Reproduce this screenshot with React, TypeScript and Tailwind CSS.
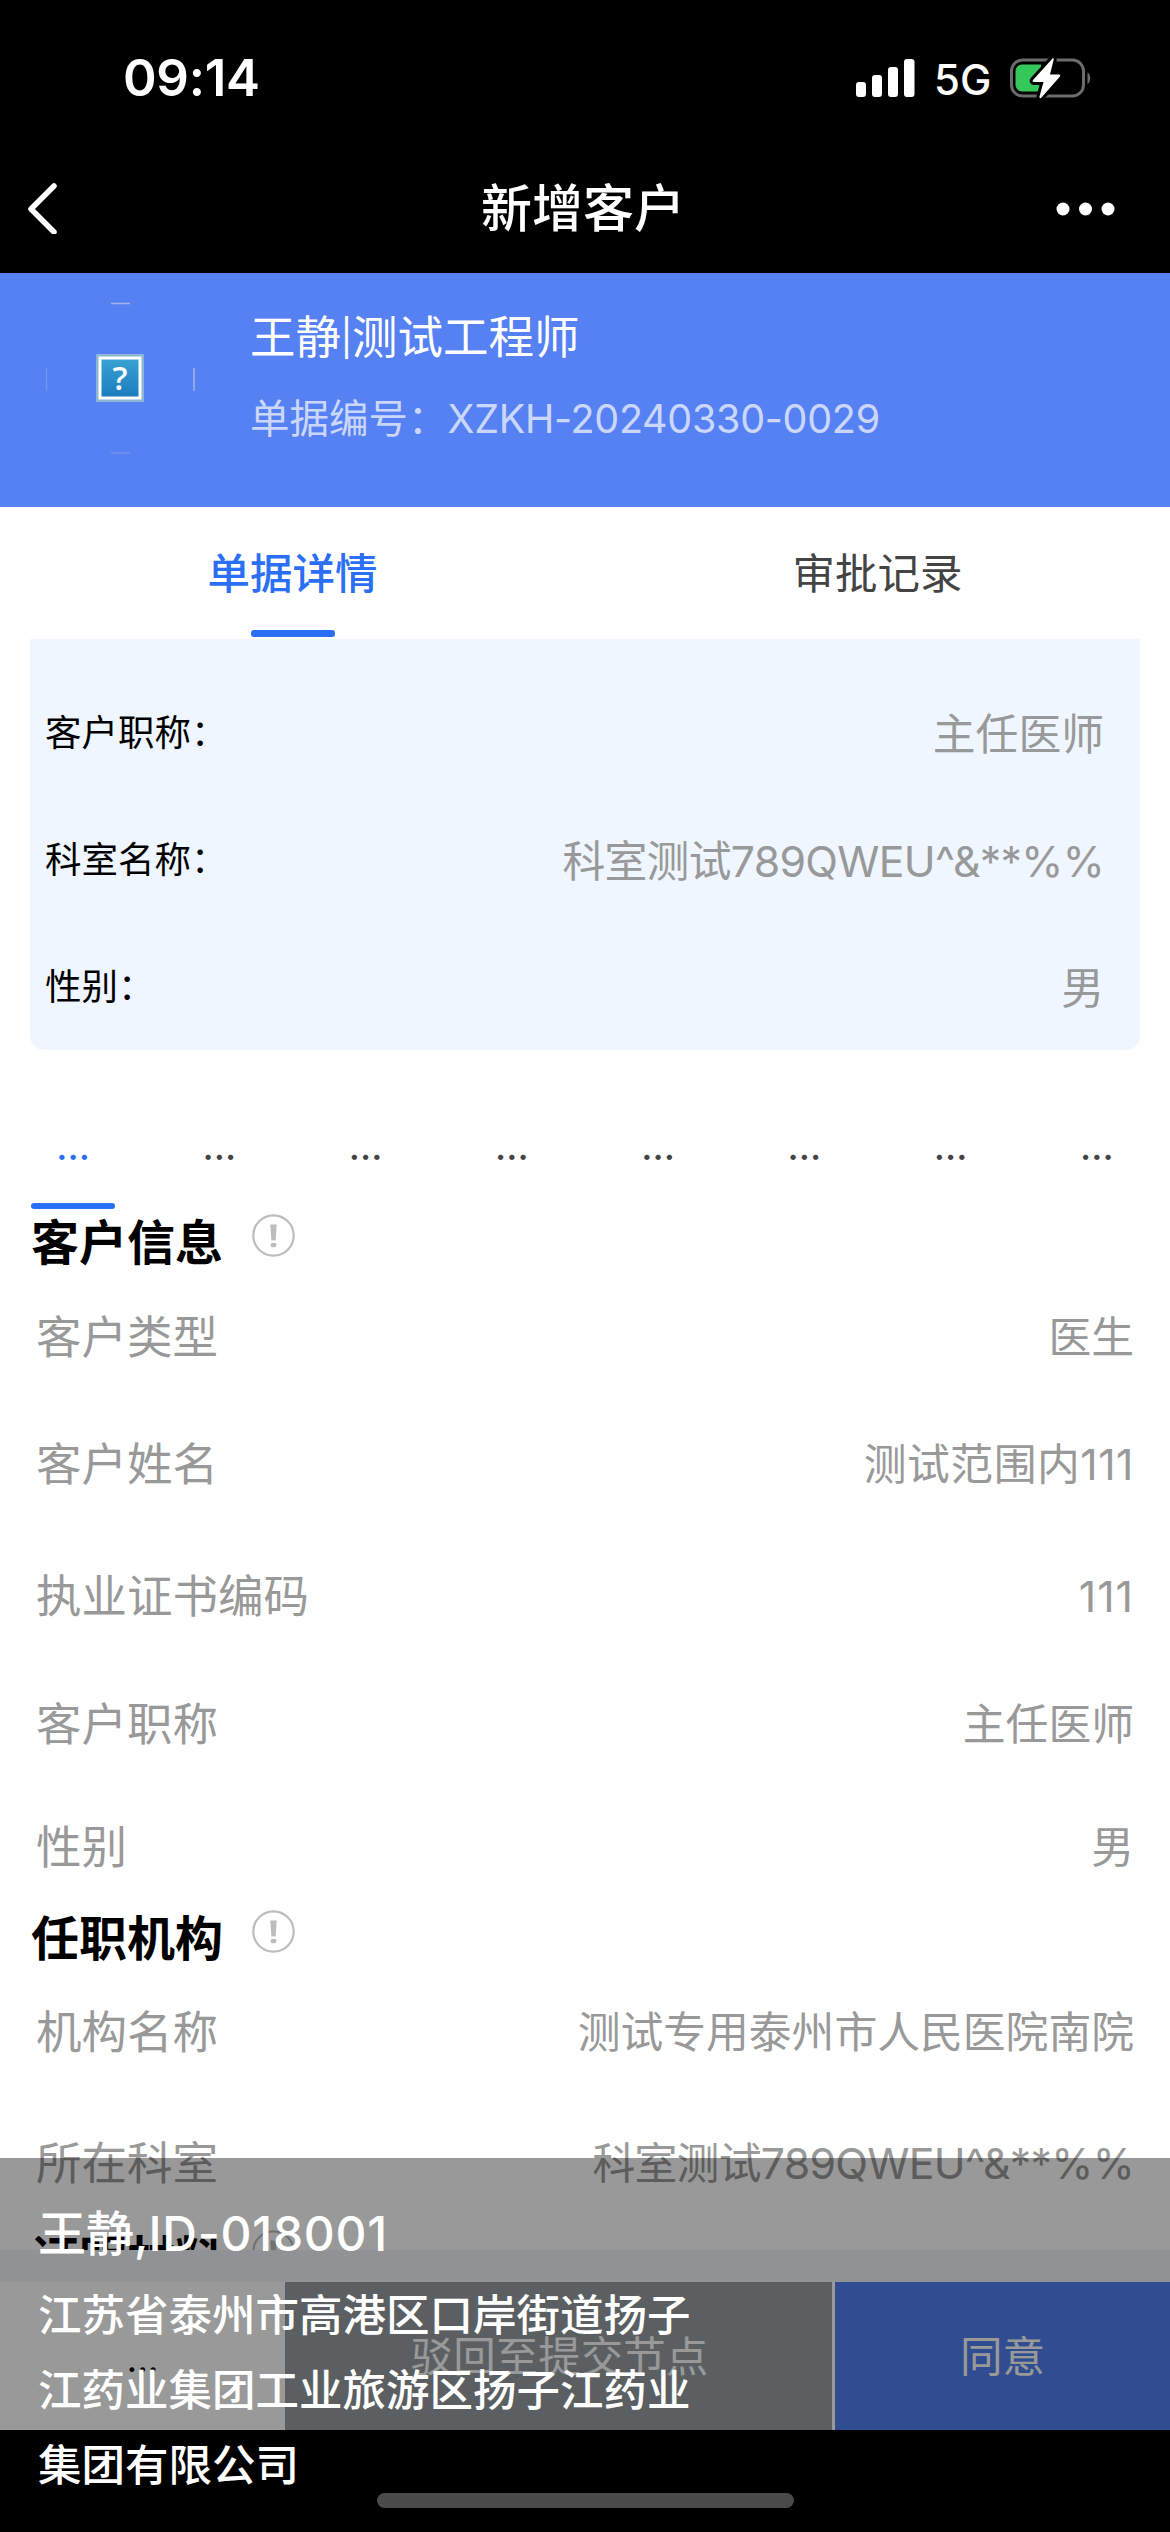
import { useState } from 'react';
import clsx from 'clsx';

interface Field {
  label: string;
  value: string;
  height: string;
  spacing?: string;
}

const summary = [
  { label: '客户职称：', value: '主任医师', spacing: '' },
  { label: '科室名称：', value: '科室测试789QWEU^&**%%', spacing: 'tracking-[-0.7px]' },
  { label: '性别：', value: '男', spacing: '' },
];

const customerFields: Field[] = [
  { label: '客户类型', value: '医生', height: 'h-[128px]' },
  { label: '客户姓名', value: '测试范围内111', height: 'h-[127px]', spacing: 'tracking-[0.5px]' },
  { label: '执业证书编码', value: '111', height: 'h-[136px]', spacing: 'tracking-[1px]' },
  { label: '客户职称', value: '主任医师', height: 'h-[120px]' },
  { label: '性别', value: '男', height: 'h-[126px]' },
];

const orgFields: Field[] = [
  { label: '机构名称', value: '测试专用泰州市人民医院南院', height: 'h-[128px]' },
  { label: '所在科室', value: '科室测试789QWEU^&**%%', height: 'h-[134px]', spacing: 'tracking-[-0.7px]' },
];

function StatusBar() {
  return (
    <div className="flex h-[156px] shrink-0 items-center justify-between pl-[123px] pr-[77px] text-white">
      <span className="text-[51px] font-semibold leading-[60px] tracking-[-0.3px]">09:14</span>
      <div className="flex items-center">
        <svg width="60" height="38" viewBox="0 0 60 38" fill="#fff">
          <rect x="0" y="23" width="10" height="15" rx="3" />
          <rect x="16" y="16" width="10" height="22" rx="3" />
          <rect x="32" y="8" width="10" height="30" rx="3" />
          <rect x="48" y="0" width="10.500" height="38" rx="3" />
        </svg>
        <span className="ml-[18px] w-[58px] pt-[3px] text-[42px] font-medium leading-[60px]">5G</span>
        <svg className="ml-[17px]" width="84" height="44" viewBox="0 0 84 44">
          <rect x="2.500" y="4" width="72" height="36" rx="11" fill="none" stroke="#6b6b6b" strokeWidth="3" />
          <path d="M78.500 16.500c3.600 1.400 3.600 10 0 11.500z" fill="#6b6b6b" />
          <path d="M13 8.500h19v27H13a6.500 6.500 0 0 1-6.500-6.500V15A6.500 6.500 0 0 1 13 8.500z" fill="#34c759" />
          <path
            d="M43.500 2.500 24 24c-.8 1-.2 2 1 2h9.500L30.500 40.500c-.4 1.600 1 2.200 2 1.100L51 20.500c.8-1 .2-2-1-2h-9L44.600 4c.3-1.400-.2-2.300-1.100-1.500z"
            fill="#fff"
            stroke="#000"
            strokeWidth="6"
            paintOrder="stroke"
          />
        </svg>
      </div>
    </div>
  );
}

function NavBar() {
  return (
    <div className="flex h-[117px] shrink-0 items-center justify-between pb-[13px] pl-[26px] pr-[54px] text-white">
      <svg width="60" height="52" viewBox="0 0 60 52" fill="none">
        <path d="M28 4 5 27l23 23" stroke="#fff" strokeWidth="5.500" strokeLinecap="round" strokeLinejoin="round" />
      </svg>
      <span className="pl-[24px] pt-[2px] text-[51px] font-medium leading-[60px]">新增客户</span>
      <svg width="60" height="16" viewBox="0 0 60 16" fill="#fff">
        <circle cx="7" cy="9" r="6.500" />
        <circle cx="29.500" cy="9" r="6.500" />
        <circle cx="52" cy="9" r="6.500" />
      </svg>
    </div>
  );
}

function Avatar() {
  return (
    <svg width="150" height="152" viewBox="0 0 150 152">
      <defs>
        <linearGradient id="missing" x1="0" y1="0" x2="0" y2="1">
          <stop offset="0" stopColor="#36a2d2" />
          <stop offset="1" stopColor="#1e7cbf" />
        </linearGradient>
      </defs>
      <path d="M66 1.500h19M149 66v23" stroke="#a3b3e4" strokeWidth="1.500" />
      <path d="M66 151h19M1.500 66v23" stroke="#7593ea" strokeWidth="1.500" />
      <rect x="51" y="52" width="48" height="48" fill="#8bb5d3" />
      <rect x="53.500" y="54.500" width="43" height="43" fill="#fff" />
      <rect x="56.500" y="57.500" width="37" height="37" fill="url(#missing)" />
      <text x="75" y="87.500" textAnchor="middle" fontSize="33" fontWeight="600" fill="#fff" className="font-['Open_Sans']">?</text>
    </svg>
  );
}

function SectionTitle({ title, className }: { title: string; className: string }) {
  return (
    <div className={clsx('flex shrink-0 items-center pl-[31px]', className)}>
      <h2 className="text-[48px] font-bold leading-[58px] text-black">{title}</h2>
      <svg className="relative -top-[8px] ml-[29px]" width="43" height="43" viewBox="0 0 43 43">
        <circle cx="21.500" cy="21.500" r="20.200" fill="none" stroke="#bdbdbd" strokeWidth="2.200" />
        <path d="M18.300 10.500h6.400l-1.100 16h-4.200z" fill="#bdbdbd" />
        <ellipse cx="21.500" cy="31" rx="3" ry="2.300" fill="#bdbdbd" />
      </svg>
    </div>
  );
}

function FieldRow({ label, value, height, spacing }: Field) {
  return (
    <div className={clsx('flex shrink-0 items-center justify-between pl-[36px] pr-[36px] pt-px text-[#999]', height)}>
      <span className="text-[45.500px] leading-[60px]">{label}</span>
      <span className={clsx('text-[42.800px] leading-[60px]', spacing)}>{value}</span>
    </div>
  );
}

export default function App() {
  const [tab, setTab] = useState(0);
  const [section, setSection] = useState(0);

  return (
    <div className="relative flex h-[2532px] w-[1170px] flex-col overflow-hidden bg-black font-['Inter','Noto_Sans_CJK_SC',sans-serif]">
      <StatusBar />
      <NavBar />

      {/* Applicant banner */}
      <div className="flex h-[234px] shrink-0 bg-[#5681f2] pl-[45px] pt-[29px]">
        <Avatar />
        <div className="ml-[55px] flex flex-col pt-[6px] text-white">
          <span className="flex items-center text-[45.500px] leading-[60px]">
            王静
            <span className="flex w-[11px] justify-center text-[36px]">|</span>
            测试工程师
          </span>
          <span className="mt-[21px] text-[39.500px] leading-[60px] text-white/70">
            单据编号：<span className="tracking-[-0.3px]">XZKH-20240330-0029</span>
          </span>
        </div>
      </div>

      {/* Main tabs */}
      <div className="flex h-[132px] shrink-0 bg-white">
        {['单据详情', '审批记录'].map((name, i) => (
          <button
            key={name}
            onClick={() => setTab(i)}
            className={clsx('flex flex-1 flex-col items-center pt-[37px] text-[42.500px] leading-[60px]', i === tab ? 'font-medium text-[#2a6ff6]' : 'text-[#444]')}
          >
            {name}
            {i === tab && <span className="mt-[26px] h-[7px] w-[84px] rounded-[3px] bg-[#2a6ff6]" />}
          </button>
        ))}
      </div>

      <div className="flex h-[1611px] shrink-0 flex-col overflow-hidden bg-white">
        {/* Summary card */}
        <div className="mx-[30px] flex h-[411px] shrink-0 flex-col rounded-b-[14px] bg-[#eff6ff] pl-[15px] pr-[36px] pt-[30px]">
          {summary.map(item => (
            <div key={item.label} className="flex h-[127.500px] items-center justify-between">
              <span className="text-[36.500px] leading-[50px] text-black">{item.label}</span>
              <span className={clsx('pt-[4px] text-[42.800px] leading-[60px] text-[#999]', item.spacing)}>{item.value}</span>
            </div>
          ))}
        </div>

        {/* Section tabs */}
        <div className="flex h-[159px] shrink-0">
          {Array.from({ length: 8 }, (_, i) => (
            <button
              key={i}
              onClick={() => setSection(i)}
              className={clsx('flex flex-1 flex-col items-center pt-[72px] text-[37px] font-medium leading-[50px]', i === section ? 'text-[#2a6ff6]' : 'text-[#444]')}
            >
              ...
              {i === section && <span className="mt-[31px] h-[6px] w-[84px] rounded-[3px] bg-[#2a6ff6]" />}
            </button>
          ))}
        </div>

        <SectionTitle title="客户信息" className="h-[64px] pt-[4px]" />
        {customerFields.map(f => <FieldRow key={f.label} {...f} />)}
        <SectionTitle title="任职机构" className="h-[58px]" />
        {orgFields.map(f => <FieldRow key={f.label} {...f} />)}
        <SectionTitle title="证明材料" className="h-[58px]" />
      </div>

      {/* Bottom actions */}
      <div className="flex h-[180px] shrink-0 border-t-[32px] border-[#f2f4fa] bg-white text-[42.500px] text-white">
        <button className="w-[285px] pt-[6px] text-[37px] text-black">...</button>
        <button className="w-[547px] bg-[#989fa4] pl-[2px] pt-[2px]">驳回至提交节点</button>
        <button className="ml-[3px] flex-1 bg-[#5380f2] pt-[2px]">同意</button>
      </div>

      {/* Location watermark */}
      <div className="absolute inset-x-0 bottom-0 h-[374px] bg-black/40 pl-[38px] pt-[38px] text-white">
        <p className="text-[48px] font-medium leading-[76px]">
          王静,<span className="tracking-[0.7px]">ID-018001</span>
        </p>
        <p className="mt-[6px] w-[680px] text-[43.500px] font-medium leading-[75px]">
          江苏省泰州市高港区口岸街道扬子江药业集团工业旅游区扬子江药业集团有限公司
        </p>
        <div className="absolute left-[377px] top-[335px] h-[15px] w-[417px] rounded-full bg-[#4a4a4a]" />
      </div>
    </div>
  );
}
